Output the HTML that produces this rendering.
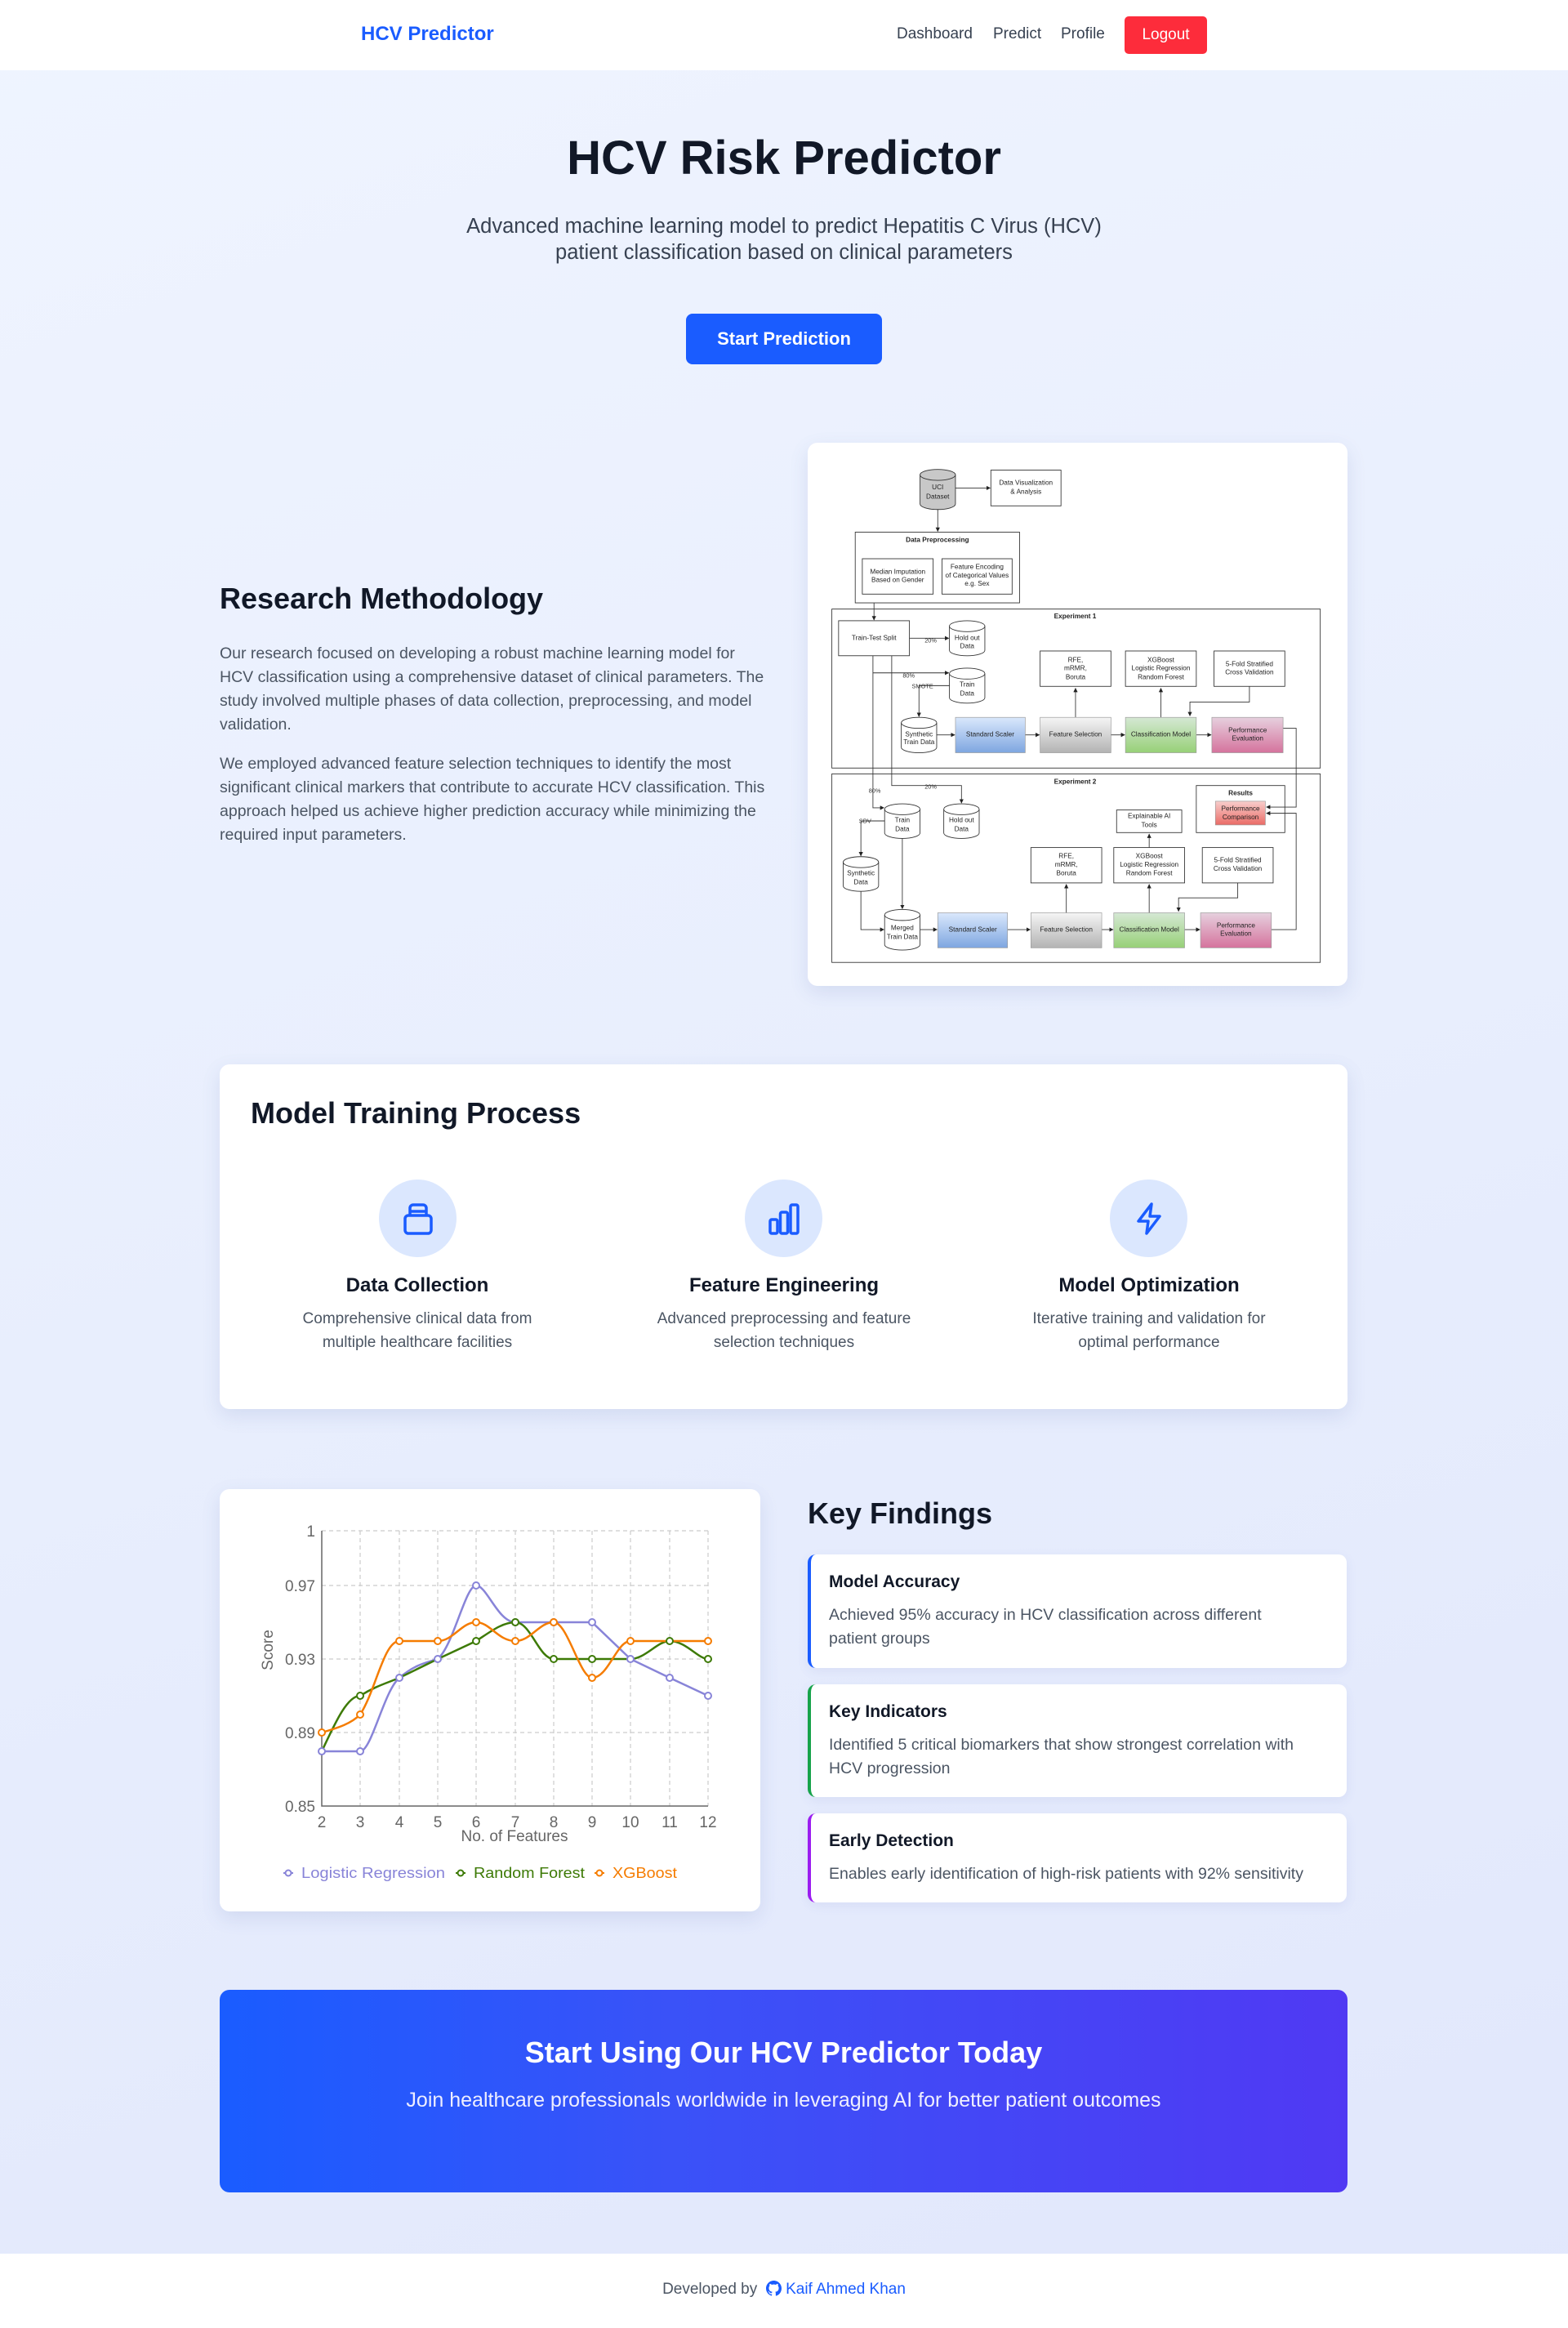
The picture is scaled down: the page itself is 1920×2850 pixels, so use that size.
<!DOCTYPE html>
<html><head><meta charset="utf-8"><style>
*{box-sizing:border-box;margin:0;padding:0}
body{width:1920px;height:2850px;font-family:"Liberation Sans",sans-serif;background:linear-gradient(160deg,#eff4ff 0%,#e8eefd 50%,#e1e7fc 100%);position:relative;overflow:hidden;color:#111827}
.a{position:absolute}
nav{position:absolute;left:0;top:0;width:1920px;height:86px;background:#fff}
.brand{left:442px;top:28px;font-size:24px;font-weight:bold;color:#1a5cff}
.nl{top:31px;font-size:19px;color:#374151}
.logout{left:1377px;top:20px;width:101px;height:46px;background:#fd2c3b;border-radius:5px;color:#fff;font-size:19px;text-align:center;line-height:46px}
h1{position:absolute;left:0;width:1920px;text-align:center;top:160px;font-size:58px;font-weight:bold}
.sub{left:0;width:1920px;text-align:center;top:261px;font-size:25.5px;line-height:32px;color:#374151}
.btn{left:840px;top:384px;width:240px;height:62px;background:#1a5cff;border-radius:8px;color:#fff;font-size:22px;font-weight:bold;text-align:center;line-height:62px}
h2{position:absolute;font-size:36px;font-weight:bold;color:#111827}
.p{font-size:19.5px;line-height:29px;color:#4b5563;width:668px}
.card{background:#fff;border-radius:12px;box-shadow:0 8px 24px rgba(60,80,160,.12)}
.ic{width:95px;height:95px;border-radius:50%;background:#dbe7fe}
.ft{font-size:24px;font-weight:bold;text-align:center;width:440px}
.fd{font-size:19px;line-height:29px;color:#4b5563;text-align:center;width:440px}
.kf{left:989px;width:660px;background:#fff;border-radius:10px;padding:22px 20px 0 22px;box-shadow:0 4px 14px rgba(60,80,160,.08)}
.kf b{display:block;font-size:21px;color:#111827;margin-bottom:14px}
.kf span{font-size:19.5px;line-height:29px;color:#4b5563;display:block;white-space:nowrap}
</style></head><body>
<nav>
<div class="a brand">HCV Predictor</div>
<div class="a nl" style="left:1098px">Dashboard</div>
<div class="a nl" style="left:1216px">Predict</div>
<div class="a nl" style="left:1299px">Profile</div>
<div class="a logout">Logout</div>
</nav>
<h1>HCV Risk Predictor</h1>
<div class="a sub">Advanced machine learning model to predict Hepatitis C Virus (HCV)<br>patient classification based on clinical parameters</div>
<div class="a btn">Start Prediction</div>

<h2 style="left:269px;top:712px">Research Methodology</h2>
<div class="a p" style="left:269px;top:786px">Our research focused on developing a robust machine learning model for HCV classification using a comprehensive dataset of clinical parameters. The study involved multiple phases of data collection, preprocessing, and model validation.</div>
<div class="a p" style="left:269px;top:921px">We employed advanced feature selection techniques to identify the most significant clinical markers that contribute to accurate HCV classification. This approach helped us achieve higher prediction accuracy while minimizing the required input parameters.</div>

<div class="a card" style="left:989px;top:542px;width:661px;height:665px"></div>
<svg class="a" style="left:980px;top:530px" width="680" height="700" viewBox="0 0 1568 1568" preserveAspectRatio="none" font-family="Liberation Sans,sans-serif" font-size="19" text-anchor="middle">
<defs>
<linearGradient id="gb" x1="0" y1="0" x2="0" y2="1"><stop offset="0" stop-color="#dae8fc"/><stop offset="1" stop-color="#7ea6e0"/></linearGradient>
<linearGradient id="gg" x1="0" y1="0" x2="0" y2="1"><stop offset="0" stop-color="#f5f5f5"/><stop offset="1" stop-color="#b3b3b3"/></linearGradient>
<linearGradient id="gn" x1="0" y1="0" x2="0" y2="1"><stop offset="0" stop-color="#d5e8d4"/><stop offset="1" stop-color="#97d077"/></linearGradient>
<linearGradient id="gp" x1="0" y1="0" x2="0" y2="1"><stop offset="0" stop-color="#e6d0de"/><stop offset="1" stop-color="#d5739d"/></linearGradient>
<linearGradient id="gr" x1="0" y1="0" x2="0" y2="1"><stop offset="0" stop-color="#f8cecc"/><stop offset="1" stop-color="#ea6b66"/></linearGradient>
<marker id="ar" viewBox="0 0 10 10" refX="9" refY="5" markerWidth="6" markerHeight="6" orient="auto"><path d="M0 0L10 5L0 10z" fill="#222"/></marker>
</defs>
<g fill="none" stroke="#333" stroke-width="2">
<rect x="538" y="102" width="198" height="98"/>
<rect x="155" y="272" width="464" height="194"/>
<rect x="175" y="345" width="200" height="97"/><rect x="400" y="345" width="198" height="97"/>
<rect x="89" y="483" width="1379" height="436"/>
<rect x="108" y="515" width="200" height="96"/>
<rect x="677" y="598" width="200" height="97"/><rect x="918" y="598" width="200" height="97"/><rect x="1168" y="598" width="200" height="97"/>
<rect x="89" y="935" width="1379" height="517"/>
<rect x="1118" y="967" width="250" height="129"/>
<rect x="893" y="1034" width="184" height="62"/>
<rect x="651" y="1137" width="200" height="97"/><rect x="885" y="1137" width="200" height="97"/><rect x="1135" y="1137" width="200" height="97"/>
</g>
<g fill="none" stroke="#333" stroke-width="2" marker-end="url(#ar)">
<path d="M438 151H536"/><path d="M388 207V270"/><path d="M208 466V513"/><path d="M308 563H419"/>
<path d="M205 611V1028H236"/><path d="M258 611V967H455V1015"/><path d="M205 658H419"/><path d="M421 693H335V778"/>
<path d="M385 828H436"/><path d="M635 828H675"/><path d="M877 828H916"/><path d="M1118 828H1160"/>
<path d="M777 780V700"/><path d="M1018 780V700"/><path d="M1268 695V738H1100V776"/>
<path d="M1363 810H1400V1026H1316"/><path d="M338 1064H171V1160"/><path d="M171 1257V1362H236"/><path d="M288 1112V1305"/>
<path d="M338 1362H386"/><path d="M585 1362H649"/><path d="M851 1362H883"/><path d="M1085 1362H1128"/>
<path d="M751 1316V1238"/><path d="M985 1316V1238"/><path d="M985 1137V1100"/><path d="M1235 1234V1275H1068V1312"/><path d="M1330 1362H1400V1043H1316"/>
</g>
<g fill="#333" font-size="17"><text x="368" y="575">20%</text><text x="306" y="671">80%</text><text x="345" y="700">SMOTE</text><text x="210" y="987">80%</text><text x="368" y="975">20%</text><text x="183" y="1070">SDV</text></g>
<g stroke="#333" stroke-width="2">
<path d="M338 115a50 15 0 0 1 100 0v80a50 15 0 0 1-100 0z" fill="#c8c8c8"/><path d="M338 115a50 15 0 0 0 100 0" fill="none"/>
</g>
<g stroke="#333" stroke-width="2" fill="#fff">
<path d="M421 530a50 15 0 0 1 100 0v66a50 15 0 0 1-100 0z"/>
<path d="M421 660a50 15 0 0 1 100 0v66a50 15 0 0 1-100 0z"/>
<path d="M285 795a50 15 0 0 1 100 0v67a50 15 0 0 1-100 0z"/>
<path d="M238 1032a50 15 0 0 1 100 0v65a50 15 0 0 1-100 0z"/>
<path d="M405 1032a50 15 0 0 1 100 0v65a50 15 0 0 1-100 0z"/>
<path d="M121 1177a50 15 0 0 1 100 0v65a50 15 0 0 1-100 0z"/>
<path d="M238 1322a50 15 0 0 1 100 0v81a50 15 0 0 1-100 0z"/>
<path fill="none" d="M421 530a50 15 0 0 0 100 0M421 660a50 15 0 0 0 100 0M285 795a50 15 0 0 0 100 0M238 1032a50 15 0 0 0 100 0M405 1032a50 15 0 0 0 100 0M121 1177a50 15 0 0 0 100 0M238 1322a50 15 0 0 0 100 0"/>
</g>
<g stroke="#999" stroke-width="1.5">
<rect x="438" y="780" width="197" height="97" fill="url(#gb)"/><rect x="677" y="780" width="200" height="97" fill="url(#gg)"/><rect x="918" y="780" width="200" height="97" fill="url(#gn)"/><rect x="1162" y="780" width="201" height="97" fill="url(#gp)"/>
<rect x="388" y="1316" width="197" height="96" fill="url(#gb)"/><rect x="651" y="1316" width="200" height="96" fill="url(#gg)"/><rect x="885" y="1316" width="200" height="96" fill="url(#gn)"/><rect x="1130" y="1316" width="200" height="96" fill="url(#gp)"/>
<rect x="1172" y="1010" width="141" height="65" fill="url(#gr)"/>
</g>
<g fill="#222">
<text x="388" y="155">UCI</text><text x="388" y="180">Dataset</text>
<text x="637" y="142">Data Visualization</text><text x="637" y="167">&amp; Analysis</text>
<text x="387" y="299" font-weight="bold">Data Preprocessing</text>
<text x="275" y="386">Median Imputation</text><text x="275" y="409">Based on Gender</text>
<text x="499" y="373">Feature Encoding</text><text x="499" y="397">of Categorical Values</text><text x="499" y="419">e.g. Sex</text>
<text x="776" y="508" font-weight="bold">Experiment 1</text>
<text x="208" y="568">Train-Test Split</text>
<text x="471" y="568">Hold out</text><text x="471" y="590">Data</text>
<text x="471" y="696">Train</text><text x="471" y="720">Data</text>
<text x="335" y="832">Synthetic</text><text x="335" y="854">Train Data</text>
<text x="536" y="832">Standard Scaler</text><text x="777" y="832">Feature Selection</text><text x="1018" y="832">Classification Model</text>
<text x="1263" y="821">Performance</text><text x="1263" y="843">Evaluation</text>
<text x="777" y="628">RFE,</text><text x="777" y="651">mRMR,</text><text x="777" y="675">Boruta</text>
<text x="1018" y="628">XGBoost</text><text x="1018" y="651">Logistic Regression</text><text x="1018" y="675">Random Forest</text>
<text x="1268" y="639">5-Fold Stratified</text><text x="1268" y="662">Cross Validation</text>
<text x="776" y="962" font-weight="bold">Experiment 2</text>
<text x="1243" y="993" font-weight="bold">Results</text>
<text x="1243" y="1036">Performance</text><text x="1243" y="1059">Comparison</text>
<text x="985" y="1056">Explainable AI</text><text x="985" y="1081">Tools</text>
<text x="288" y="1067">Train</text><text x="288" y="1092">Data</text>
<text x="455" y="1067">Hold out</text><text x="455" y="1092">Data</text>
<text x="171" y="1213">Synthetic</text><text x="171" y="1238">Data</text>
<text x="288" y="1363">Merged</text><text x="288" y="1388">Train Data</text>
<text x="487" y="1368">Standard Scaler</text><text x="751" y="1368">Feature Selection</text><text x="985" y="1368">Classification Model</text>
<text x="1230" y="1356">Performance</text><text x="1230" y="1379">Evaluation</text>
<text x="751" y="1166">RFE,</text><text x="751" y="1190">mRMR,</text><text x="751" y="1213">Boruta</text>
<text x="985" y="1166">XGBoost</text><text x="985" y="1190">Logistic Regression</text><text x="985" y="1213">Random Forest</text>
<text x="1235" y="1177">5-Fold Stratified</text><text x="1235" y="1201">Cross Validation</text>
</g>
</svg>

<div class="a card" style="left:269px;top:1303px;width:1381px;height:422px"></div>
<h2 style="left:307px;top:1342px">Model Training Process</h2>
<div class="a ic" style="left:464px;top:1444px"></div>
<div class="a ic" style="left:912px;top:1444px"></div>
<div class="a ic" style="left:1359px;top:1444px"></div>
<svg class="a" style="left:492px;top:1471px" width="40" height="42" viewBox="0 0 40 42" fill="none" stroke="#1a5cff" stroke-width="3.5" stroke-linejoin="round"><rect x="4" y="17" width="32" height="22" rx="4"/><path d="M10 17V8a4 4 0 0 1 4-4h12a4 4 0 0 1 4 4v9M10 12h20"/></svg>
<svg class="a" style="left:940px;top:1471px" width="40" height="42" viewBox="0 0 40 42" fill="none" stroke="#1a5cff" stroke-width="3.5" stroke-linejoin="round"><rect x="3" y="22" width="9" height="17" rx="2"/><rect x="15.5" y="13" width="9" height="26" rx="2"/><rect x="28" y="4" width="9" height="35" rx="2"/></svg>
<svg class="a" style="left:1387px;top:1471px" width="40" height="42" viewBox="0 0 40 42" fill="none" stroke="#1a5cff" stroke-width="3.5" stroke-linejoin="round"><path d="M23 3L7 24h12l-2 15L33 18H21z"/></svg>
<div class="a ft" style="left:291px;top:1560px">Data Collection</div>
<div class="a fd" style="left:291px;top:1600px">Comprehensive clinical data from<br>multiple healthcare facilities</div>
<div class="a ft" style="left:740px;top:1560px">Feature Engineering</div>
<div class="a fd" style="left:740px;top:1600px">Advanced preprocessing and feature<br>selection techniques</div>
<div class="a ft" style="left:1187px;top:1560px">Model Optimization</div>
<div class="a fd" style="left:1187px;top:1600px">Iterative training and validation for<br>optimal performance</div>

<div class="a card" style="left:269px;top:1823px;width:662px;height:517px"></div>
<svg class="a" style="left:269px;top:1823px" width="662" height="517" viewBox="269 1823 662 517" font-family="Liberation Sans,sans-serif" font-size="19">
<g stroke="#ccc" stroke-dasharray="5 4" stroke-width="1.2">
<path d="M394 1874H867M394 1941H867M394 2031H867M394 2121H867"/>
<path d="M441 1874V2211M489 1874V2211M536 1874V2211M583 1874V2211M631 1874V2211M678 1874V2211M725 1874V2211M772 1874V2211M820 1874V2211M867 1874V2211"/>
</g>
<path d="M394 1874V2211H867" stroke="#666" stroke-width="1.5" fill="none"/>
<g fill="#666" text-anchor="end"><text x="386" y="1881">1</text><text x="386" y="1948">0.97</text><text x="386" y="2038">0.93</text><text x="386" y="2128">0.89</text><text x="386" y="2218">0.85</text></g>
<g fill="#666" text-anchor="middle"><text x="394" y="2237">2</text><text x="441" y="2237">3</text><text x="489" y="2237">4</text><text x="536" y="2237">5</text><text x="583" y="2237">6</text><text x="631" y="2237">7</text><text x="678" y="2237">8</text><text x="725" y="2237">9</text><text x="772" y="2237">10</text><text x="820" y="2237">11</text><text x="867" y="2237">12</text>
<text x="630" y="2254">No. of Features</text>
<text transform="translate(334,2020) rotate(-90)">Score</text></g>
<g fill="none" stroke-width="2.5">
<path stroke="#8884d8" d="M394 2144L441 2144C455 2144 470 2070 489 2054S520 2036 536 2031C555 2015 570 1941 583 1941C596 1941 610 1986 631 1986L725 1986L772 2031L820 2054L867 2076"/>
<path stroke="#3d7a06" d="M394 2144C410 2110 425 2076 441 2076C460 2064 475 2060 489 2054L536 2031L583 2009C600 1998 615 1986 631 1986C650 1986 660 2031 678 2031L772 2031C790 2031 805 2009 820 2009C840 2009 855 2031 867 2031"/>
<path stroke="#f57c00" d="M394 2121C415 2115 430 2110 441 2099C460 2070 470 2009 489 2009L536 2009C555 2009 565 1986 583 1986C600 1986 610 2009 631 2009C650 2009 660 1986 678 1986C695 1986 710 2054 725 2054C745 2054 755 2009 772 2009L867 2009"/>
</g>
<g fill="#fff" stroke-width="2">
<g stroke="#8884d8"><circle cx="394" cy="2144" r="4"/><circle cx="441" cy="2144" r="4"/><circle cx="489" cy="2054" r="4"/><circle cx="536" cy="2031" r="4"/><circle cx="583" cy="1941" r="4"/><circle cx="631" cy="1986" r="4"/><circle cx="678" cy="1986" r="4"/><circle cx="725" cy="1986" r="4"/><circle cx="772" cy="2031" r="4"/><circle cx="820" cy="2054" r="4"/><circle cx="867" cy="2076" r="4"/></g>
<g stroke="#3d7a06"><circle cx="441" cy="2076" r="4"/><circle cx="583" cy="2009" r="4"/><circle cx="631" cy="1986" r="4"/><circle cx="678" cy="2031" r="4"/><circle cx="725" cy="2031" r="4"/><circle cx="820" cy="2009" r="4"/><circle cx="867" cy="2031" r="4"/></g>
<g stroke="#f57c00"><circle cx="394" cy="2121" r="4"/><circle cx="441" cy="2099" r="4"/><circle cx="489" cy="2009" r="4"/><circle cx="536" cy="2009" r="4"/><circle cx="583" cy="1986" r="4"/><circle cx="631" cy="2009" r="4"/><circle cx="678" cy="1986" r="4"/><circle cx="725" cy="2054" r="4"/><circle cx="772" cy="2009" r="4"/><circle cx="867" cy="2009" r="4"/></g>
</g>
<g font-size="18.5">
<path d="M347 2293h12" stroke-width="2" stroke="#8884d8"/>
<circle cx="353" cy="2293" r="3.5" fill="#fff" stroke="#8884d8" stroke-width="2"/>
<text x="369" y="2299" fill="#8884d8" textLength="176" lengthAdjust="spacingAndGlyphs">Logistic Regression</text>
<path d="M558 2293h12" stroke="#3d7a06" stroke-width="2"/><circle cx="564" cy="2293" r="3.5" fill="#fff" stroke="#3d7a06" stroke-width="2"/>
<text x="580" y="2299" fill="#3d7a06" textLength="136" lengthAdjust="spacingAndGlyphs">Random Forest</text>
<path d="M728 2293h12" stroke="#f57c00" stroke-width="2"/><circle cx="734" cy="2293" r="3.5" fill="#fff" stroke="#f57c00" stroke-width="2"/>
<text x="750" y="2299" fill="#f57c00" textLength="79" lengthAdjust="spacingAndGlyphs">XGBoost</text>
</g>
</svg>

<h2 style="left:989px;top:1832px">Key Findings</h2>
<div class="a kf" style="top:1903px;height:139px;border-left:4px solid #1a5cff"><b>Model Accuracy</b><span>Achieved 95% accuracy in HCV classification across different<br>patient groups</span></div>
<div class="a kf" style="top:2062px;height:138px;border-left:4px solid #16a34a"><b>Key Indicators</b><span>Identified 5 critical biomarkers that show strongest correlation with<br>HCV progression</span></div>
<div class="a kf" style="top:2220px;height:109px;border-left:4px solid #9b1cf0"><b>Early Detection</b><span>Enables early identification of high-risk patients with 92% sensitivity</span></div>

<div class="a" style="left:269px;top:2436px;width:1381px;height:248px;border-radius:12px;background:linear-gradient(90deg,#1a5cff,#3a52f8 40%,#5039f3)"></div>
<div class="a" style="left:269px;top:2492px;width:1381px;text-align:center;color:#fff;font-size:36px;font-weight:bold">Start Using Our HCV Predictor Today</div>
<div class="a" style="left:269px;top:2557px;width:1381px;text-align:center;color:#eef;font-size:25px">Join healthcare professionals worldwide in leveraging AI for better patient outcomes</div>

<div class="a" style="left:0;top:2759px;width:1920px;height:91px;background:#fff"></div>
<div class="a" style="left:0;top:2792px;width:1920px;text-align:center;font-size:19px;color:#4b5563">Developed by &nbsp;<svg width="19" height="19" viewBox="0 0 16 16" style="vertical-align:-3px"><path fill="#1a5cff" d="M8 0C3.58 0 0 3.58 0 8c0 3.54 2.29 6.53 5.47 7.59.4.07.55-.17.55-.38v-1.33c-2.23.48-2.7-1.07-2.7-1.07-.36-.93-.89-1.17-.89-1.17-.73-.5.05-.49.05-.49.8.06 1.23.83 1.23.83.72 1.23 1.87.87 2.33.67.07-.52.28-.87.51-1.07-1.78-.2-3.64-.89-3.64-3.95 0-.87.31-1.59.82-2.15-.08-.2-.36-1.02.08-2.12 0 0 .67-.21 2.2.82a7.7 7.7 0 0 1 4 0c1.53-1.04 2.2-.82 2.2-.82.44 1.1.16 1.92.08 2.12.51.56.82 1.27.82 2.15 0 3.07-1.87 3.75-3.65 3.95.29.25.54.73.54 1.48v2.2c0 .21.15.46.55.38A8 8 0 0 0 16 8c0-4.42-3.58-8-8-8z"/></svg> <span style="color:#1a5cff">Kaif Ahmed Khan</span></div>
</body></html>
